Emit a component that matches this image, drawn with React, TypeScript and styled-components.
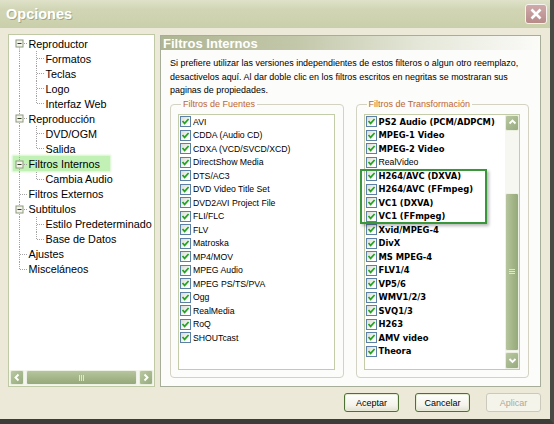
import styled, { createGlobalStyle } from "styled-components";

const GlobalStyle = createGlobalStyle`
  html, body {
    margin: 0;
    padding: 0;
    background: #ece9d8;
  }
  body {
    font-family: "Liberation Sans", Arial, sans-serif;
  }
`;

const Window = styled.div`
  width: 554px;
  height: 424px;
  box-sizing: border-box;
  display: flex;
  flex-direction: column;
  background: #ece9d8;
  border-right: 4px solid #4a4a44;
  border-bottom: 5px solid #3c3c38;
  overflow: hidden;
`;

const TitleBar = styled.div`
  height: 28px;
  flex: none;
  display: flex;
  align-items: center;
  justify-content: space-between;
  padding: 0 3px 0 6px;
  background: linear-gradient(#dfe2c9, #d1d5b4 35%, #cacfab);
`;

const Title = styled.span`
  color: #ffffff;
  font-weight: bold;
  font-size: 14.5px;
  text-shadow: 1px 1px 0 rgba(110, 115, 80, 0.45);
`;

const CloseButton = styled.div`
  width: 22px;
  height: 20px;
  box-sizing: border-box;
  border: 1px solid #f6f2f0;
  border-radius: 3px;
  background: linear-gradient(#cfaaaa, #b88a8a);
  display: grid;
  place-items: center;
`;

const Body = styled.div`
  flex: 1;
  display: flex;
  flex-direction: column;
  padding: 6px 9px 0 8px;
`;

const Panels = styled.div`
  display: flex;
  gap: 5px;
  height: 353px;
`;

/* ---------- tree ---------- */

const TreePanel = styled.div`
  width: 147px;
  box-sizing: border-box;
  border: 1px solid #bfc9a6;
  background: #ffffff;
  display: flex;
  flex-direction: column;
`;

const Tree = styled.div`
  flex: 1;
  padding: 1px 0 0 2px;
`;

const TreeRow = styled.div<{ $selected?: boolean }>`
  position: relative;
  isolation: isolate;
  display: flex;
  align-items: center;
  height: 15.07px;
  font-size: 10.8px;
  color: #000;
  white-space: nowrap;

  ${(p) =>
    p.$selected &&
    `
    &::before {
      content: "";
      position: absolute;
      left: 2px;
      top: -1px;
      width: 97px;
      height: 15px;
      background: #c2f1b6;
      box-shadow: 0 0 2px 1px #d2f5c8;
      z-index: -1;
    }
  `}
`;

const TreeText = styled.span`
  padding-left: 0.5px;
`;

type GuideKind = "first" | "tee" | "last" | "pipe";

const Guide = ({ kind, expander }: { kind: GuideKind; expander?: boolean }) => {
  const top = kind === "first" ? 7.5 : 0;
  const bottom = kind === "last" ? 7.5 : 15;
  return (
    <svg width="17" height="15" style={{ flex: "none" }}>
      <line x1="8.5" y1={top} x2="8.5" y2={bottom} stroke="#a3a3a3" strokeDasharray="1 1" />
      {kind !== "pipe" && (
        <line x1="9" y1="7.5" x2="17" y2="7.5" stroke="#a3a3a3" strokeDasharray="1 1" />
      )}
      {expander && (
        <g>
          <rect x="5" y="4" width="7" height="7" fill="#f4f3ee" stroke="#8c9a7c" />
          <line x1="6.5" y1="7.5" x2="10.5" y2="7.5" stroke="#2d3a1d" />
        </g>
      )}
    </svg>
  );
};

type TreeItem = { label: string; level: 0 | 1; kind: GuideKind; expander?: boolean; selected?: boolean };

const treeItems: TreeItem[] = [
  { label: "Reproductor", level: 0, kind: "first", expander: true },
  { label: "Formatos", level: 1, kind: "tee" },
  { label: "Teclas", level: 1, kind: "tee" },
  { label: "Logo", level: 1, kind: "tee" },
  { label: "Interfaz Web", level: 1, kind: "last" },
  { label: "Reproducción", level: 0, kind: "tee", expander: true },
  { label: "DVD/OGM", level: 1, kind: "tee" },
  { label: "Salida", level: 1, kind: "last" },
  { label: "Filtros Internos", level: 0, kind: "tee", expander: true, selected: true },
  { label: "Cambia Audio", level: 1, kind: "last" },
  { label: "Filtros Externos", level: 0, kind: "tee" },
  { label: "Subtitulos", level: 0, kind: "tee", expander: true },
  { label: "Estilo Predeterminado", level: 1, kind: "tee" },
  { label: "Base de Datos", level: 1, kind: "last" },
  { label: "Ajustes", level: 0, kind: "tee" },
  { label: "Misceláneos", level: 0, kind: "last" },
];

/* ---------- scrollbars ---------- */

const HScroll = styled.div`
  height: 15px;
  flex: none;
  display: flex;
  gap: 2px;
  padding: 0 1px 1px 1px;
  background: #f6f6f0;
`;

const ScrollButton = styled.div<{ $w?: number; $h?: number }>`
  width: ${(p) => p.$w ?? 14}px;
  height: ${(p) => p.$h ?? 15}px;
  flex: none;
  box-sizing: border-box;
  border: 1px solid #e9eedf;
  border-radius: 2px;
  background: linear-gradient(135deg, #b9c8a2, #97ab7e);
  display: grid;
  place-items: center;
`;

const HThumb = styled.div`
  flex: 1;
  box-sizing: border-box;
  border: 1px solid #eef1e6;
  border-radius: 2px;
  background: linear-gradient(#b6c59e, #a2b486 60%, #96a97b);
  display: grid;
  place-items: center;
`;

const VScroll = styled.div`
  width: 14px;
  flex: none;
  display: flex;
  flex-direction: column;
  background: #f7f7f1;
`;

const VTrack = styled.div`
  flex: 1;
  display: flex;
  flex-direction: column;
  padding: 62px 0 1px;
`;

const VThumb = styled.div`
  flex: 1;
  box-sizing: border-box;
  border: 1px solid #eef1e6;
  border-radius: 2px;
  background: linear-gradient(to right, #b6c59e, #a2b486 60%, #96a97b);
  display: grid;
  place-items: center;
`;

const Chevron = ({ dir }: { dir: "left" | "right" | "up" | "down" }) => {
  const d = {
    left: "M6.5 2.5 L3.5 5.5 L6.5 8.5",
    right: "M3.5 2.5 L6.5 5.5 L3.5 8.5",
    up: "M2.5 6.5 L5.5 3.5 L8.5 6.5",
    down: "M2.5 4 L5.5 7 L8.5 4",
  }[dir];
  return (
    <svg width="11" height="11" viewBox="0 0 11 11">
      <path d={d} fill="none" stroke="#ffffff" strokeWidth="1.9" />
    </svg>
  );
};

const Grip = ({ vertical }: { vertical?: boolean }) => (
  <svg width="8" height="8" viewBox="0 0 8 8">
    {[1.5, 3.5, 5.5].map((v) =>
      vertical ? (
        <line key={v} x1="1" y1={v} x2="7" y2={v} stroke="#dfe7d2" />
      ) : (
        <line key={v} x1={v} y1="1" x2={v} y2="7" stroke="#dfe7d2" />
      ),
    )}
  </svg>
);

/* ---------- main panel ---------- */

const MainPanel = styled.div`
  flex: 1;
  margin-top: 1px;
  box-sizing: border-box;
  border: 1px solid #a6ad98;
  background: #fcfcfa;
  display: flex;
  flex-direction: column;
`;

const Header = styled.div`
  height: 14px;
  flex: none;
  display: flex;
  align-items: center;
  padding-left: 2px;
  color: #ffffff;
  font-weight: bold;
  font-size: 13px;
  background: linear-gradient(to right, #aeb592, #c2c7a9 35%, #e6e8da 70%, #fbfbf8);
`;

const Description = styled.p`
  margin: 7px 0 0 9px;
  font-size: 8.95px;
  line-height: 13.5px;
  color: #000;
  white-space: nowrap;
`;

const Groups = styled.div`
  flex: 1;
  display: flex;
  gap: 12px;
  padding: 1px 11px 8px 9px;
`;

const Group = styled.fieldset`
  flex: 1;
  margin: 0;
  min-width: 0;
  padding: 2px 8px 7px 7px;
  border: 1px solid #d3d2c3;
  border-radius: 4px;
  display: flex;
  flex-direction: column;
`;

const Legend = styled.legend`
  margin-left: 3px;
  padding: 0 2px;
  font-size: 9px;
  line-height: 11px;
  color: #c1652c;
`;

const List = styled.div`
  position: relative;
  flex: 1;
  display: flex;
  margin-top: 2px;
  border: 1px solid #c2cca9;
  background: #ffffff;
`;

const Items = styled.div`
  flex: 1;
  padding: 0.5px 1px 0;
`;

const Item = styled.div<{ $bold?: boolean }>`
  display: flex;
  align-items: center;
  gap: 2px;
  height: 13.5px;
  white-space: nowrap;
  color: #000;
  font-family: ${(p) => (p.$bold ? '"DejaVu Sans", Verdana, sans-serif' : '"Liberation Sans", Arial, sans-serif')};
  font-weight: ${(p) => (p.$bold ? "bold" : "normal")};
  font-size: ${(p) => (p.$bold ? "8.4px" : "8.7px")};
`;

const CheckBox = styled.span`
  width: 11px;
  height: 11px;
  flex: none;
  box-sizing: border-box;
  border: 1px solid #5d80a6;
  background: linear-gradient(135deg, #dcdcd4, #ffffff 80%);
  display: grid;
  place-items: center;
`;

const Check = () => (
  <CheckBox>
    <svg width="9" height="9" viewBox="0 0 9 9">
      <path d="M1.5 4 L3.6 6.4 L7.6 2" fill="none" stroke="#21a521" strokeWidth="1.7" />
    </svg>
  </CheckBox>
);

const Callout = styled.div`
  position: absolute;
  left: -5px;
  top: 54px;
  width: 127px;
  height: 55px;
  box-sizing: border-box;
  border: 2px solid #3a963a;
  box-shadow: 2px 2px 3px rgba(0, 0, 0, 0.28);
  pointer-events: none;
`;

/* ---------- buttons ---------- */

const ButtonRow = styled.div`
  display: flex;
  justify-content: flex-end;
  gap: 16px;
  margin-top: 6px;
`;

const DialogButton = styled.button<{ $disabled?: boolean }>`
  width: 55px;
  height: 19px;
  padding: 0;
  font-family: "Liberation Sans", Arial, sans-serif;
  font-size: 9px;
  border-radius: 3px;
  border: 1px solid ${(p) => (p.$disabled ? "#cbc9bb" : "#4f7033")};
  color: ${(p) => (p.$disabled ? "#aca899" : "#000")};
  background: ${(p) =>
    p.$disabled ? "#f5f4ea" : "linear-gradient(#ffffff, #f3f2ea 70%, #e2e0d2)"};
  box-shadow: ${(p) => (p.$disabled ? "none" : "inset 0 0 0 1px #e6ebd6")};
`;

const sourceFilters = [
  "AVI",
  "CDDA (Audio CD)",
  "CDXA (VCD/SVCD/XCD)",
  "DirectShow Media",
  "DTS/AC3",
  "DVD Video Title Set",
  "DVD2AVI Project File",
  "FLI/FLC",
  "FLV",
  "Matroska",
  "MP4/MOV",
  "MPEG Audio",
  "MPEG PS/TS/PVA",
  "Ogg",
  "RealMedia",
  "RoQ",
  "SHOUTcast",
];

const transformFilters: { label: string; bold: boolean }[] = [
  { label: "PS2 Audio (PCM/ADPCM)", bold: true },
  { label: "MPEG-1 Video", bold: true },
  { label: "MPEG-2 Video", bold: true },
  { label: "RealVideo", bold: false },
  { label: "H264/AVC (DXVA)", bold: true },
  { label: "H264/AVC (FFmpeg)", bold: true },
  { label: "VC1 (DXVA)", bold: true },
  { label: "VC1 (FFmpeg)", bold: true },
  { label: "Xvid/MPEG-4", bold: true },
  { label: "DivX", bold: true },
  { label: "MS MPEG-4", bold: true },
  { label: "FLV1/4", bold: true },
  { label: "VP5/6", bold: true },
  { label: "WMV1/2/3", bold: true },
  { label: "SVQ1/3", bold: true },
  { label: "H263", bold: true },
  { label: "AMV video", bold: true },
  { label: "Theora", bold: true },
];

export default function App() {
  return (
    <>
      <GlobalStyle />
      <Window>
        <TitleBar>
          <Title>Opciones</Title>
          <CloseButton>
            <svg width="14" height="14" viewBox="0 0 14 14">
              <path d="M2.5 2.5 L11.5 11.5 M11.5 2.5 L2.5 11.5" stroke="#ffffff" strokeWidth="2.6" />
            </svg>
          </CloseButton>
        </TitleBar>

        <Body>
          <Panels>
            <TreePanel>
              <Tree>
                {treeItems.map((it) => (
                  <TreeRow key={it.label} $selected={it.selected}>
                    {it.level === 0 ? (
                      <Guide kind={it.kind} expander={it.expander} />
                    ) : (
                      <>
                        <Guide kind="pipe" />
                        <Guide kind={it.kind} />
                      </>
                    )}
                    <TreeText>{it.label}</TreeText>
                  </TreeRow>
                ))}
              </Tree>
              <HScroll>
                <ScrollButton>
                  <Chevron dir="left" />
                </ScrollButton>
                <HThumb>
                  <Grip />
                </HThumb>
                <ScrollButton>
                  <Chevron dir="right" />
                </ScrollButton>
              </HScroll>
            </TreePanel>

            <MainPanel>
              <Header>Filtros Internos</Header>
              <Description>
                Si prefiere utilizar las versiones independientes de estos filteros o algun otro reemplazo,
                <br />
                desactivelos aquí. Al dar doble clic en los filtros escritos en negritas se mostraran sus
                <br />
                paginas de propiedades.
              </Description>
              <Groups>
                <Group>
                  <Legend>Filtros de Fuentes</Legend>
                  <List>
                    <Items>
                      {sourceFilters.map((f) => (
                        <Item key={f}>
                          <Check />
                          {f}
                        </Item>
                      ))}
                    </Items>
                  </List>
                </Group>
                <Group>
                  <Legend>Filtros de Transformación</Legend>
                  <List>
                    <Items>
                      {transformFilters.map((f) => (
                        <Item key={f.label} $bold={f.bold}>
                          <Check />
                          {f.label}
                        </Item>
                      ))}
                    </Items>
                    <VScroll>
                      <ScrollButton $h={16}>
                        <Chevron dir="up" />
                      </ScrollButton>
                      <VTrack>
                        <VThumb>
                          <Grip vertical />
                        </VThumb>
                      </VTrack>
                      <ScrollButton $h={17}>
                        <Chevron dir="down" />
                      </ScrollButton>
                    </VScroll>
                    <Callout />
                  </List>
                </Group>
              </Groups>
            </MainPanel>
          </Panels>

          <ButtonRow>
            <DialogButton>Aceptar</DialogButton>
            <DialogButton>Cancelar</DialogButton>
            <DialogButton $disabled>Aplicar</DialogButton>
          </ButtonRow>
        </Body>
      </Window>
    </>
  );
}
